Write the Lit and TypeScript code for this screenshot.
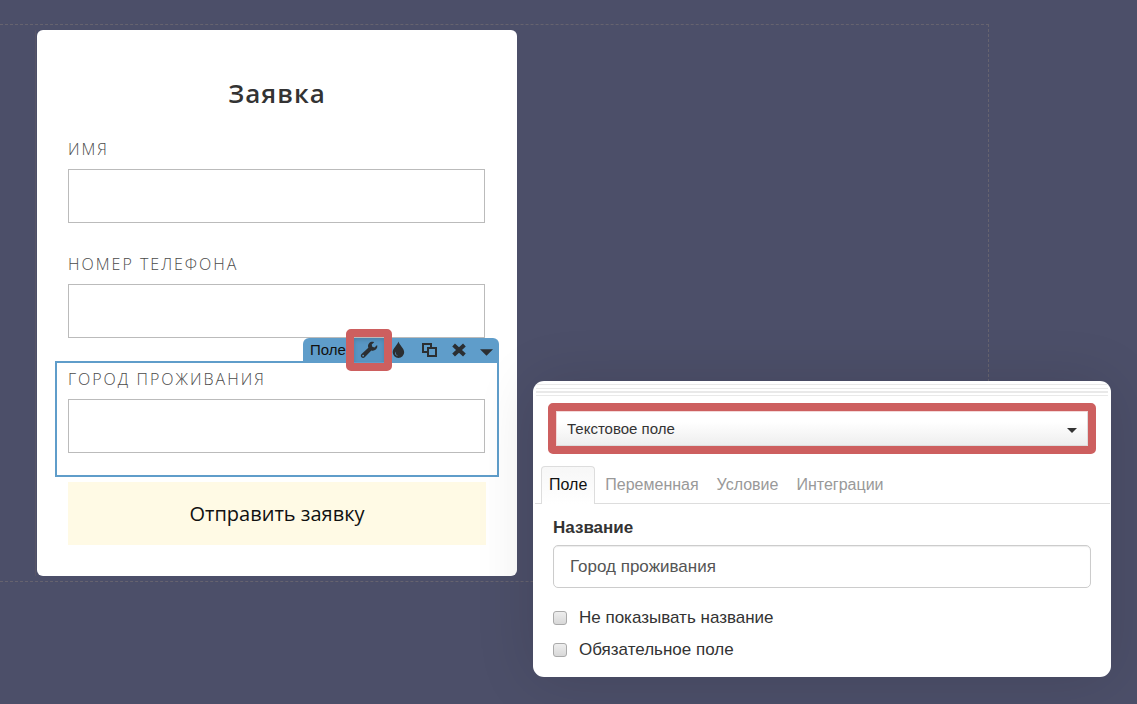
import { LitElement, html, css, svg } from "lit";
import { customElement, state } from "lit/decorators.js";

const wrenchIcon = svg`<svg viewBox="0 0 16 16" width="18" height="18" aria-hidden="true">
  <path fill="currentColor" fill-rule="evenodd" d="M15.2 3.6 12.9 5.7 10.9 5.2 10.4 3.2 12.6 1c-1.7-.6-3.4-.2-4.5 1-1 1.1-1.200 2.500-.7 3.900L1.400 11.600c-.9.8-.9 2.100-.1 2.900.8.8 2.100.8 2.900-.1l5.900-6c1.400.5 2.900.2 4-.8 1.100-1.100 1.600-2.600 1.100-4ZM2.800 12.200a.8.8 0 1 1 0 1.600.8.8 0 0 1 0-1.600Z"/>
</svg>`;

const dropIcon = svg`<svg viewBox="0 0 16 16" width="18" height="18" aria-hidden="true">
  <path fill="currentColor" fill-rule="evenodd" d="M7.500 .5C6.800 3.600 2.400 6.500 2.400 10a5.100 5.100 0 0 0 10.200 0C12.600 6.500 8.200 3.600 7.500 .5ZM5.100 9.300c-.5 1.900.4 3.200 2 3.700-2.200.3-3.400-2-2-3.700Z"/>
</svg>`;

const cloneIcon = svg`<svg viewBox="0 0 16 16" width="16" height="16" aria-hidden="true">
  <path fill="none" stroke="currentColor" stroke-width="2" d="M6 10H2V2h8v4M7 6h8v8H7Z"/>
</svg>`;

const crossIcon = svg`<svg viewBox="0 0 16 16" width="16" height="16" aria-hidden="true">
  <path fill="none" stroke="currentColor" stroke-width="4" d="M2.600 3l10.800 10M13.400 3l-10.800 10"/>
</svg>`;

const caretIcon = svg`<svg viewBox="0 0 14 7" width="13" height="7" aria-hidden="true">
  <path fill="currentColor" d="M0 0h14L7 7Z"/>
</svg>`;

@customElement("field-toolbar")
export class FieldToolbar extends LitElement {
  static styles = css`
    :host {
      display: flex;
      height: 24px;
      border-radius: 6px 6px 0 0;
      background: #5f9dca;
      color: #2b2e31;
      font-family: "Liberation Sans", Arial, sans-serif;
    }
    .name {
      padding-left: 7px;
      width: 44px;
      font-size: 15px;
      line-height: 24px;
      color: #111;
    }
    .tool {
      display: flex;
      align-items: center;
      justify-content: center;
      width: 30px;
      padding: 0;
      border: 0;
      background: none;
      color: inherit;
    }
    .tool.active {
      position: relative;
      background: #5896c3;
      box-shadow: inset 0 2px 4px rgba(0, 0, 0, 0.15);
    }
    .tool.active::after {
      content: "";
      position: absolute;
      inset: -9px -8px;
      border: 8px solid #cd5f5f;
      border-radius: 5px;
    }
    .tool.more {
      width: 25px;
      padding-top: 4px;
    }
  `;

  render() {
    return html`
      <span class="name">Поле</span>
      <button class="tool active" aria-label="Настройки">${wrenchIcon}</button>
      <button class="tool" aria-label="Оформление">${dropIcon}</button>
      <button class="tool" aria-label="Дублировать">${cloneIcon}</button>
      <button class="tool" aria-label="Удалить">${crossIcon}</button>
      <button class="tool more" aria-label="Ещё">${caretIcon}</button>
    `;
  }
}

@customElement("request-form")
export class RequestForm extends LitElement {
  static styles = css`
    :host {
      display: block;
      font-family: "Open Sans", sans-serif;
    }
    .card {
      box-sizing: border-box;
      padding: 45px 31px 31px;
      border-radius: 6px;
      background: #fff;
    }
    .title {
      margin: 0 0 21px;
      font-size: 26px;
      line-height: 36px;
      font-weight: 600;
      letter-spacing: 1px;
      text-align: center;
      color: #333;
    }
    .field {
      position: relative;
      display: flex;
      flex-direction: column;
      gap: 8px;
      padding: 5px 0 24px;
    }
    .label {
      font-size: 16px;
      line-height: 24px;
      font-weight: 300;
      letter-spacing: 2px;
      text-transform: uppercase;
      color: #4a4a4a;
    }
    .input {
      box-sizing: border-box;
      height: 54px;
      margin-right: 1px;
      padding: 0 16px;
      border: 1px solid #bbb;
      border-radius: 0;
      background: transparent;
      font: inherit;
    }
    .field.selected::after {
      content: "";
      position: absolute;
      inset: -1px -13px 0;
      border: 2px solid #5f9dca;
      pointer-events: none;
    }
    .toolbar {
      position: absolute;
      right: -13px;
      bottom: 100%;
      z-index: 1;
    }
    .submit {
      display: block;
      width: 100%;
      height: 63px;
      margin-top: 5px;
      padding: 0;
      border: 0;
      background: #fffae5;
      font: inherit;
      font-size: 20px;
      color: #111;
    }
  `;

  private fields = [
    { id: "name", label: "Имя" },
    { id: "phone", label: "Номер телефона" },
    { id: "city", label: "Город проживания", selected: true },
  ];

  render() {
    return html`
      <form class="card">
        <h2 class="title">Заявка</h2>
        ${this.fields.map(
          (f) => html`
            <div class="field ${f.selected ? "selected" : ""}">
              ${f.selected ? html`<field-toolbar class="toolbar"></field-toolbar>` : ""}
              <label class="label" for=${f.id}>${f.label}</label>
              <input class="input" id=${f.id} type="text" />
            </div>
          `
        )}
        <button class="submit" type="button">Отправить заявку</button>
      </form>
    `;
  }
}

@customElement("field-settings")
export class FieldSettings extends LitElement {
  static styles = css`
    :host {
      display: block;
      padding: 3px 0 11px;
      box-sizing: border-box;
      border-radius: 11px;
      background: #fff;
      box-shadow: 0 2px 60px rgba(0, 0, 0, 0.12);
      font-family: "Liberation Sans", Arial, sans-serif;
      color: #333;
    }
    .grip {
      display: block;
      width: calc(100% - 6px);
      height: 12px;
      margin: 0 3px 7px;
    }
    .type {
      position: relative;
      margin: 0 15px;
      border: 8px solid #cd5f5f;
      border-radius: 5px;
    }
    .select {
      display: block;
      width: 100%;
      height: 35px;
      padding: 0 10px;
      border: 1px solid #ddd;
      border-color: #f3d9d9 #ddd #ddd #f3d9d9;
      border-radius: 0;
      appearance: none;
      background: linear-gradient(#fff 30%, #eee);
      font: inherit;
      font-size: 15px;
      color: #333;
    }
    .arrow {
      position: absolute;
      top: 17px;
      right: 11px;
      border: 5px solid transparent;
      border-top-color: #333;
      border-bottom: 0;
      pointer-events: none;
    }
    .tabs {
      display: flex;
      margin: 12px 1px 0 2px;
      padding-left: 6px;
      border-bottom: 1px solid #ddd;
    }
    .tab {
      box-sizing: border-box;
      height: 38px;
      margin-bottom: -1px;
      padding: 0 8px 2px;
      border: 1px solid transparent;
      border-bottom: 0;
      border-radius: 4px 4px 0 0;
      background: none;
      font: inherit;
      font-size: 16px;
      color: #999;
    }
    .tab.current {
      padding: 0 7px 2px;
      margin-right: 1px;
      border-color: #ddd;
      background: linear-gradient(#f7f7f7, #fff);
      color: #111;
    }
    .body {
      padding: 12px 20px 0;
      font-size: 17px;
    }
    .caption {
      display: block;
      margin-bottom: 5px;
      line-height: 24px;
      font-weight: 700;
    }
    .value {
      box-sizing: border-box;
      width: 100%;
      height: 43px;
      margin-bottom: 14px;
      padding: 0 16px;
      border: 1px solid #ccc;
      border-radius: 5px;
      box-shadow: inset 0 1px 1px rgba(0, 0, 0, 0.075);
      font: inherit;
      color: #555;
    }
    .option {
      display: flex;
      align-items: center;
      gap: 12px;
      line-height: 32px;
    }
    .check {
      width: 14px;
      height: 14px;
      margin: 0;
      border: 1px solid #aaa;
      border-radius: 3px;
      appearance: none;
      background: linear-gradient(#eee, #d8d8d8);
    }
    .check:checked {
      background: #5f9dca;
    }
  `;

  @state() private tab = "Поле";

  render() {
    return html`
      <svg class="grip" aria-hidden="true">
        <path
          fill="#e9e9e9"
          d="M0 0h2000v1H0ZM0 4h2000v1H0ZM0 7h2000v2H0ZM0 11h2000v1H0Z"
        />
      </svg>
      <div class="type">
        <select class="select" aria-label="Тип поля">
          <option>Текстовое поле</option>
        </select>
        <span class="arrow"></span>
      </div>
      <div class="tabs" role="tablist">
        ${["Поле", "Переменная", "Условие", "Интеграции"].map(
          (t) => html`<button
            class="tab ${t === this.tab ? "current" : ""}"
            role="tab"
            aria-selected=${t === this.tab}
            @click=${() => (this.tab = t)}
          >${t}</button>`
        )}
      </div>
      <div class="body">
        <label class="caption" for="caption">Название</label>
        <input class="value" id="caption" type="text" value="Город проживания" />
        <label class="option"><input class="check" type="checkbox" />Не показывать название</label>
        <label class="option"><input class="check" type="checkbox" />Обязательное поле</label>
      </div>
    `;
  }
}

@customElement("app-root")
export class AppRoot extends LitElement {
  static styles = css`
    :host {
      position: relative;
      display: block;
      box-sizing: border-box;
      min-height: 100vh;
      padding: 24px 148px 24px 0;
      background: #4c4f69;
      overflow: hidden;
    }
    .section {
      padding: 5px 0 5px 35px;
      border: 1px dashed #66636f;
      border-left: 0;
    }
    .column {
      box-sizing: border-box;
      width: 100%;
      max-width: 483px;
      padding: 0 1px;
      border-left: 1px solid #575567;
    }
    .window {
      position: absolute;
      top: 381px;
      right: 26px;
      width: 578px;
    }
  `;

  render() {
    return html`
      <main class="section">
        <div class="column"><request-form></request-form></div>
      </main>
      <field-settings class="window"></field-settings>
    `;
  }
}
